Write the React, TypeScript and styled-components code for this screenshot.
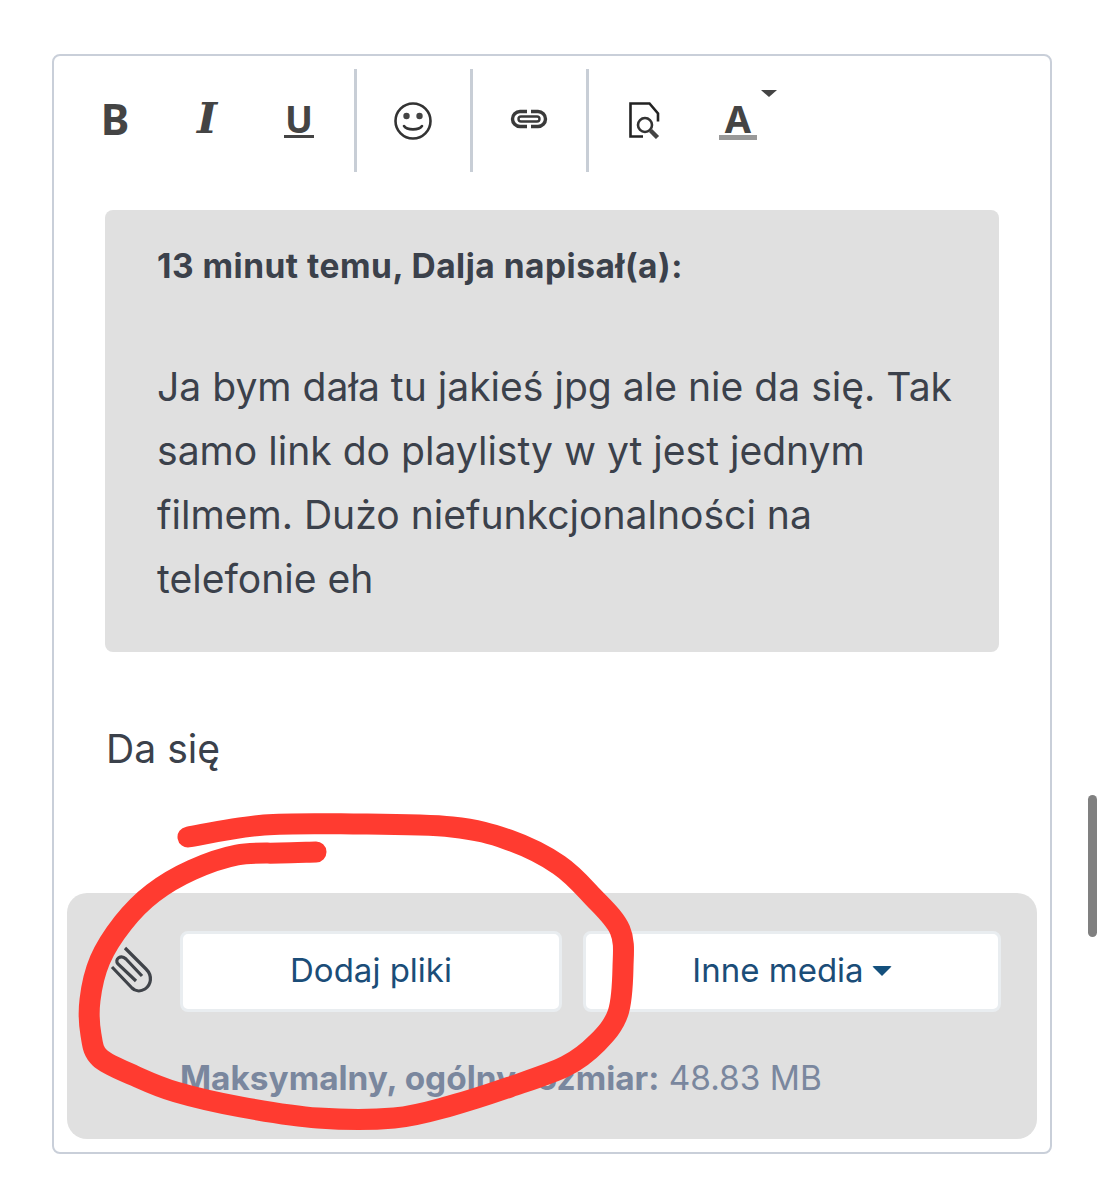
import React from 'react';
import styled, { createGlobalStyle } from 'styled-components';

const GlobalStyle = createGlobalStyle`
  html, body {
    margin: 0;
    padding: 0;
    background: #fff;
    font-family: Inter, "Liberation Sans", sans-serif;
  }
`;

const Page = styled.div`
  position: relative;
  width: 1104px;
  height: 1200px;
  padding: 54px 52px 0;
  box-sizing: border-box;
  overflow: hidden;
`;

const Editor = styled.div`
  width: 1000px;
  height: 1100px;
  box-sizing: border-box;
  border: 2px solid #c9cfd9;
  border-radius: 8px;
  padding: 13px;
  display: flex;
  flex-direction: column;
`;

const Toolbar = styled.div`
  display: flex;
  height: 103px;
  padding-left: 2px;
  color: #444;
`;

const Group = styled.div<{ $pad?: number; $last?: boolean }>`
  display: flex;
  padding-right: ${p => p.$pad ?? 0}px;
  border-right: ${p => (p.$last ? 'none' : '3px solid #c8ced6')};
`;

const ToolButton = styled.div<{ $w: number }>`
  position: relative;
  box-sizing: border-box;
  width: ${p => p.$w}px;
  height: 103px;
  display: flex;
  align-items: center;
  justify-content: center;
`;

const IconButton = styled(ToolButton)`
  padding-right: 2px;
`;

const Glyph = styled.span<{ $serif?: boolean; $size: number }>`
  font-family: ${p => (p.$serif ? '"DejaVu Serif"' : '"Noto Sans"')}, sans-serif;
  font-style: ${p => (p.$serif ? 'italic' : 'normal')};
  font-weight: 700;
  font-size: ${p => p.$size}px;
  line-height: 1;
  color: #444;
  margin-top: -4px;
`;

const UnderGlyph = styled(Glyph)`
  border-bottom: 3px solid #444;
  line-height: 33px;
  padding: 0 1px;
  margin-top: -2px;
`;

const ColorGlyph = styled(Glyph)`
  width: 38px;
  text-align: center;
  border-bottom: 5px solid #999;
  line-height: 34px;
  margin-top: 0;
`;

const Caret = styled.span`
  position: absolute;
  right: -1px;
  top: 21px;
  border-left: 8px solid transparent;
  border-right: 8px solid transparent;
  border-top: 7px solid #444;
`;

const Quote = styled.div`
  margin: 38px 38px 0;
  height: 442px;
  box-sizing: border-box;
  padding: 32px 40px 0 52px;
  background: #e0e0e0;
  border-radius: 8px;
  color: #3b414b;
`;

const QuoteHead = styled.div`
  font-size: 33.5px;
  font-weight: 700;
  letter-spacing: 0.5px;
  line-height: 48px;
  margin-bottom: 65px;
`;

const QuoteBody = styled.div`
  font-size: 39.1px;
  line-height: 64px;
`;

const Reply = styled.div`
  margin: 65px 39px 0;
  font-size: 39.1px;
  line-height: 64px;
  color: #3b414b;
`;

const Attach = styled.div`
  margin-top: auto;
  height: 246px;
  box-sizing: border-box;
  background: #e0e0e0;
  border-radius: 20px;
  padding: 38px 36px 0 113px;
  position: relative;
`;

const ClipIcon = styled.svg`
  position: absolute;
  left: 28px;
  top: 37px;
`;

const ButtonRow = styled.div`
  display: grid;
  grid-template-columns: 382px 418px;
  column-gap: 21px;
`;

const AttachButton = styled.div`
  height: 81px;
  box-sizing: border-box;
  background: #fff;
  border: 3px solid #e9edf0;
  border-radius: 8px;
  display: flex;
  align-items: center;
  justify-content: center;
  gap: 8px;
  color: #1b4d78;
  font-size: 33px;
  padding-bottom: 3px;
`;

const DownCaret = styled.span`
  border-left: 10px solid transparent;
  border-right: 10px solid transparent;
  border-top: 10px solid #14507d;
  border-radius: 2px;
  margin-top: 2px;
`;

const Limit = styled.div`
  margin-top: 44px;
  line-height: 44px;
  font-size: 33.4px;
  color: #7a879e;
  white-space: nowrap;
  b {
    font-weight: 700;
  }
`;

const ScrollThumb = styled.div`
  position: absolute;
  left: 1088px;
  top: 795px;
  width: 9px;
  height: 142px;
  border-radius: 5px;
  background: #808080;
`;

const Scribble = styled.svg`
  position: absolute;
  left: 0;
  top: 0;
  pointer-events: none;
`;

const scribblePoints: [number, number][] = [
  [188, 837], [264, 825], [356, 824], [452, 827], [509, 840], [559, 865], [593, 897],
  [620, 930], [623, 967], [618, 1013], [597, 1043], [566, 1066], [510, 1087], [450, 1106],
  [394, 1118], [318, 1118], [241, 1107], [176, 1092], [135, 1076], [100, 1058], [91, 1035],
  [90, 1000], [100, 960], [123, 923], [153, 893], [192, 870], [237, 855], [280, 853], [316, 852],
];

// catmull-rom through the points, so the marker line stays round
function smoothPath(pts: [number, number][]) {
  let d = `M${pts[0][0]} ${pts[0][1]}`;
  for (let i = 0; i < pts.length - 1; i++) {
    const p0 = pts[Math.max(i - 1, 0)];
    const p1 = pts[i];
    const p2 = pts[i + 1];
    const p3 = pts[Math.min(i + 2, pts.length - 1)];
    const c1x = p1[0] + (p2[0] - p0[0]) / 6;
    const c1y = p1[1] + (p2[1] - p0[1]) / 6;
    const c2x = p2[0] - (p3[0] - p1[0]) / 6;
    const c2y = p2[1] - (p3[1] - p1[1]) / 6;
    d += ` C${c1x.toFixed(1)} ${c1y.toFixed(1)} ${c2x.toFixed(1)} ${c2y.toFixed(1)} ${p2[0]} ${p2[1]}`;
  }
  return d;
}

function Smiley() {
  return (
    <svg width="40" height="40" viewBox="0 0 40 40" fill="none">
      <circle cx="20" cy="20" r="17.5" stroke="#333" strokeWidth="2.6" />
      <circle cx="13.5" cy="15" r="3.2" fill="#444" />
      <circle cx="26.5" cy="15" r="3.2" fill="#444" />
      <path d="M11 25c3 4.5 15 4.5 18 0" stroke="#333" strokeWidth="2.6" strokeLinecap="round" />
    </svg>
  );
}

function LinkIcon() {
  return (
    <svg width="38" height="20" viewBox="0 0 38 20" fill="none" stroke="#3a3a3a" strokeWidth="3.4" style={{ marginTop: -4 }}>
      <path d="M17 2.5h-7a7.5 7.5 0 0 0 0 15h7" />
      <path d="M21 2.5h7a7.5 7.5 0 0 1 0 15h-7" />
      <path d="M11 7.5h16a2.5 2.5 0 0 1 0 5H11a2.5 2.5 0 0 1 0-5z" strokeWidth="2.4" />
    </svg>
  );
}

function PreviewIcon() {
  return (
    <svg width="34" height="38" viewBox="0 0 34 38" fill="none" style={{ marginTop: -2 }}>
      <path d="M15 35.5H2.5V2.5h19l8.5 10v8" stroke="#222" strokeWidth="2.6" />
      <circle cx="17" cy="24" r="7" stroke="#333" strokeWidth="2.6" />
      <path d="M22.5 29.5l7 7" stroke="#444" strokeWidth="4.4" />
    </svg>
  );
}

export default function App() {
  return (
    <>
      <GlobalStyle />
      <Page>
        <Editor>
          <Toolbar>
            <Group $pad={9}>
              <ToolButton $w={92}><Glyph $size={43}>B</Glyph></ToolButton>
              <ToolButton $w={92}><Glyph $size={43} $serif>I</Glyph></ToolButton>
              <ToolButton $w={92}><UnderGlyph $size={37}>U</UnderGlyph></ToolButton>
            </Group>
            <Group>
              <IconButton $w={113}><Smiley /></IconButton>
            </Group>
            <Group>
              <IconButton $w={113}><LinkIcon /></IconButton>
            </Group>
            <Group $last>
              <IconButton $w={113}><PreviewIcon /></IconButton>
              <IconButton $w={74}>
                <ColorGlyph $size={38}>A</ColorGlyph>
                <Caret />
              </IconButton>
            </Group>
          </Toolbar>
          <Quote>
            <QuoteHead>13 minut temu, Dalja napisał(a):</QuoteHead>
            <QuoteBody>
              Ja bym dała tu jakieś jpg ale nie da się. Tak samo link do playlisty w yt jest jednym filmem. Dużo niefunkcjonalności na telefonie eh
            </QuoteBody>
          </Quote>
          <Reply>Da się</Reply>
          <Attach>
            <ClipIcon width="80" height="80" viewBox="0 0 80 80" fill="none" stroke="#40444a" strokeWidth="3.2">
              <path d="M30 18l21 21c7 7 5 16-1 20-5 3-10 2-13-1L17 37" />
              <path d="M41 51L23 34c-4-5 3-10 8-5l16 17" />
            </ClipIcon>
            <ButtonRow>
              <AttachButton>Dodaj pliki</AttachButton>
              <AttachButton>Inne media<DownCaret /></AttachButton>
            </ButtonRow>
            <Limit><b>Maksymalny, ogólny rozmiar:</b> 48.83 MB</Limit>
          </Attach>
        </Editor>
        <ScrollThumb />
        <Scribble width="1104" height="1200" viewBox="0 0 1104 1200" fill="none" stroke="#ff3b30" strokeLinecap="round" strokeLinejoin="round">
          <path d={smoothPath(scribblePoints)} strokeWidth="21" />
        </Scribble>
      </Page>
    </>
  );
}
